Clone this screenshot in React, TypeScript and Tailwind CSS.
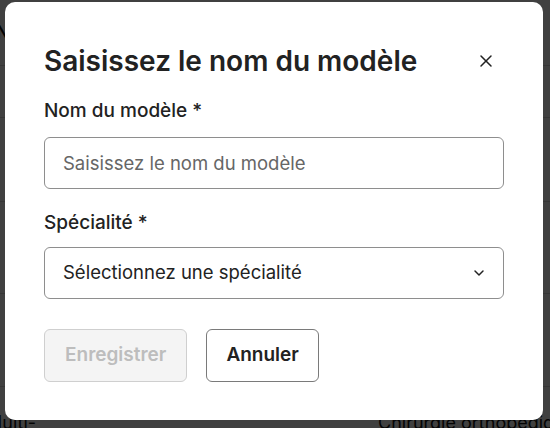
import { X, ChevronDown } from "lucide-react";

const rows = [
  { h: "h-[66px]", left: "Nom", right: "Spécialité", bold: true },
  { h: "h-[52px]", left: "", right: "" },
  { h: "h-[84px]", left: "", right: "" },
  { h: "h-[92px]", left: "", right: "Chirurgie générale" },
  { h: "h-[93px]", left: "", right: "Médecine spéciale" },
  { h: "h-[60px]", left: "Multi-", right: "Chirurgie orthopédique" },
];

function BackgroundTable() {
  return (
    <div className="absolute inset-0 bg-white text-[18px] text-[#111]">
      {rows.map((row, i) => (
        <div
          key={i}
          className={`flex ${row.h} border-b border-[#d8d8d8] ${i === 5 ? "items-start pt-[22px]" : "items-center"}`}
        >
          <div className={`w-[378px] shrink-0 ${row.bold ? "font-semibold" : ""}`}>
            {i === 5 ? <span className="-ml-[14px]">{row.left}</span> : <span className="-ml-[4px]">{row.left}</span>}
          </div>
          <div className={`flex-1 whitespace-nowrap ${row.bold ? "font-semibold" : ""}`}>{row.right}</div>
        </div>
      ))}
    </div>
  );
}

export default function App() {
  return (
    <div
      className="relative h-[428px] w-[550px] overflow-hidden"
      style={{ fontFamily: "Inter, 'Noto Sans', sans-serif" }}
    >
      <BackgroundTable />
      {/* Overlay */}
      <div className="absolute inset-0 bg-black/75" />

      {/* Modal */}
      <div className="absolute left-[5px] top-[2px] h-[418px] w-[538px] rounded-[10px] bg-white px-[39px] pt-[41px]">
        <div className="flex items-center justify-between">
          <h2 className="text-[28px] font-semibold leading-[36px] text-[#222]">
            Saisissez le nom du modèle
          </h2>
          <button className="mr-[8px] text-[#222]">
            <X className="h-[20px] w-[20px]" strokeWidth={1.8} />
          </button>
        </div>

        <label className="mt-[20px] block text-[19px] font-medium leading-[24px] text-[#222]">
          Nom du modèle *
        </label>
        <input
          type="text"
          placeholder="Saisissez le nom du modèle"
          className="mt-[14px] block h-[52px] w-full rounded-[6px] border border-[#8e8e8e] px-[18px] text-[18.5px] text-[#222] outline-none placeholder:text-[#666]"
        />

        <label className="mt-[22px] block text-[19px] font-medium leading-[24px] text-[#222]">
          Spécialité *
        </label>
        <div className="mt-[12px] flex h-[52px] w-full items-center justify-between rounded-[6px] border border-[#8e8e8e] pl-[18px] pr-[16px]">
          <span className="text-[18.5px] text-[#222]">Sélectionnez une spécialité</span>
          <ChevronDown className="h-[16px] w-[16px] text-[#222]" strokeWidth={2.2} />
        </div>

        <div className="mt-[30px] flex gap-[19px]">
          <button
            disabled
            className="h-[53px] rounded-[6px] border border-[#cfcfcf] bg-[#f4f4f4] px-[20px] text-[19px] font-semibold text-[#bdbdbd]"
          >
            Enregistrer
          </button>
          <button className="h-[53px] rounded-[6px] border border-[#7a7a7a] bg-white px-[19px] text-[19px] font-semibold text-[#222]">
            Annuler
          </button>
        </div>
      </div>
    </div>
  );
}
